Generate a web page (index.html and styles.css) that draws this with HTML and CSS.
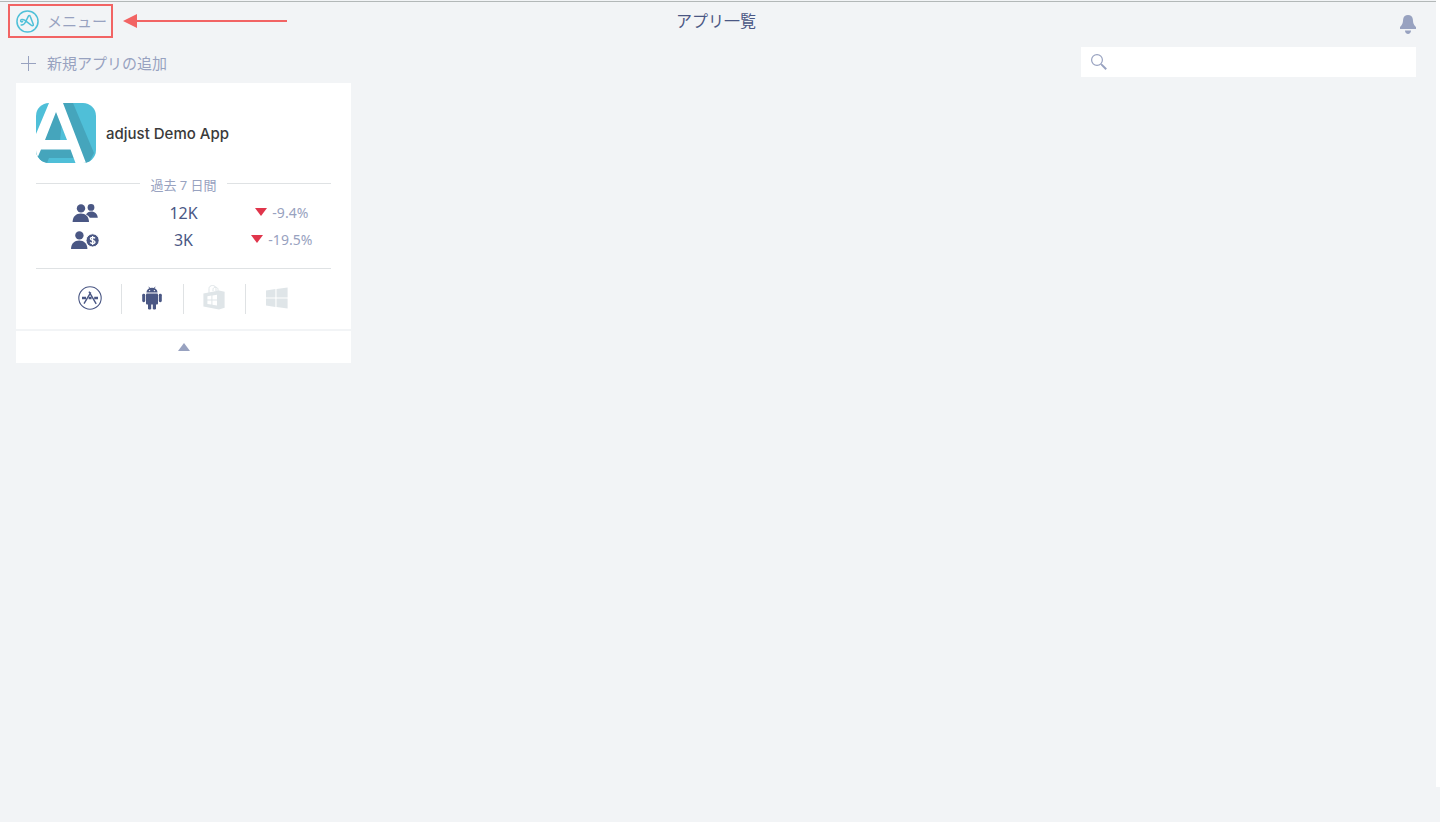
FILE: index.html
```html
<!DOCTYPE html>
<html lang="ja">
<head>
    <meta charset="UTF-8">
    <meta name="viewport" content="width=device-width, initial-scale=1.0">
    <title>アプリ一覧</title>
    <link rel="stylesheet" href="styles.css">
</head>
<body>
    <div class="page">
        <main class="content">
            <header class="header">
                <div class="header-left">
                    <button type="button" class="menu-btn">
                        <svg width="23" height="23" viewBox="0 0 24 24" fill="none" stroke="#4fc0d8" aria-hidden="true">
                            <circle cx="12" cy="12" r="11" stroke-width="1.6"/>
                            <path d="M5.4 15.6C7.6 15.8 9 14.4 9.8 12.800L12.800 6.600C13.400 5.400 14.400 5.400 14.800 6.600L18 14.800C18.600 16.400 17.200 16.800 15.800 15.800L9 10.600C7 9.200 4.600 9.800 4.800 11.400C5 12.600 6.400 12.600 6.800 12" stroke-width="1.600" stroke-linecap="round" stroke-linejoin="round"/>
                        </svg>
                        <span>メニュー</span>
                    </button>
                    <svg class="arrow" width="164" height="14" viewBox="0 0 164 14" aria-hidden="true">
                        <path d="M13 7h151" stroke="#f26464" stroke-width="2"/>
                        <path d="M0 7L14 0v14z" fill="#f26464"/>
                    </svg>
                </div>
                <h1>アプリ一覧</h1>
                <button type="button" class="bell-btn" aria-label="通知">
                    <svg width="16" height="20" viewBox="0 0 16 20" fill="#98a2c0" aria-hidden="true">
                        <path d="M8 0C10.6 0 12.4 1.4 12.8 4C13.2 7.2 13 9.2 16 12V14H0V12C3 9.2 2.8 7.2 3.2 4C3.6 1.4 5.4 0 8 0z"/>
                        <path d="M5 15.400h6c0 2-1.400 3.600-3 3.600S5 17.400 5 15.400z"/>
                    </svg>
                </button>
            </header>

            <div class="toolbar">
                <button type="button" class="add-btn">
                    <svg width="16" height="16" viewBox="0 0 16 16" stroke="#98a2c0" aria-hidden="true">
                        <path d="M7.5 0v15M0 7.5h15"/>
                    </svg>
                    <span>新規アプリの追加</span>
                </button>
                <label class="search">
                    <svg width="16" height="16" viewBox="0 0 16 16" fill="none" stroke="#98a2c0" aria-hidden="true">
                        <circle cx="6" cy="6" r="5.4" stroke-width="1.2"/>
                        <path d="M9.8 9.8l1 1" stroke-width="1.2"/>
                        <path d="M10.6 10.6l4.6 4.6" stroke-width="2"/>
                    </svg>
                    <input type="search" name="q" aria-label="アプリを検索">
                </label>
            </div>

            <div class="apps">
                <article class="card">
                    <div class="card-body">
                        <div class="app">
                            <svg width="60" height="60" viewBox="0 0 60 60" aria-hidden="true">
                                <defs>
                                    <clipPath id="logo-clip"><rect width="60" height="60" rx="13"/></clipPath>
                                </defs>
                                <g clip-path="url(#logo-clip)">
                                    <rect width="60" height="60" fill="#4fbfd8"/>
                                    <path d="M26 0h11l21 50-5 10h-5z" fill="#45a5bc"/>
                                    <path d="M20 8L33 38H8z" fill="#45a5bc"/>
                                    <path d="M25.500 23L32 38h-8z" fill="#4fbfd8"/>
                                    <path d="M0 45h40v15H0z" fill="#45a5bc"/>
                                    <path d="M13 55h27v5H11z" fill="#4fbfd8"/>
                                    <path d="M13 0h14l23 60H39.500L34.500 46.500H5L0 58V31z M20 9L9 37h22z" fill="#fff" fill-rule="evenodd"/>
                                </g>
                            </svg>
                            <h2>adjust Demo App</h2>
                        </div>

                        <div class="period"><span>過去 7 日間</span></div>

                        <table class="stats">
                            <tr>
                                <td>
                                    <svg width="28" height="20" viewBox="-1 0 28 20" fill="#4a5784" role="img" aria-label="ユーザー">
                                        <circle cx="19" cy="4.400" r="3.400"/>
                                        <path d="M14 11.400c1.200-2 3-3 5-3 4 0 6.600 2.600 6.800 6.400h-8c-.6-1.400-2-2.600-3.800-3.400z"/>
                                        <circle cx="9" cy="5.400" r="4.200"/>
                                        <path d="M.6 19c.2-5.400 3.400-8.400 8.200-8.400S16.800 13.600 17 19z"/>
                                    </svg>
                                </td>
                                <td class="value">12K</td>
                                <td class="delta"><span class="down"></span>-9.4%</td>
                            </tr>
                            <tr>
                                <td>
                                    <svg width="28" height="20" viewBox="0 0 28 20" fill="#4a5784" role="img" aria-label="課金ユーザー">
                                        <circle cx="8.400" cy="5.400" r="4.200"/>
                                        <path d="M0 19c.2-5.400 3.400-8.400 8.200-8.400S16.200 13.600 16.400 19z"/>
                                        <circle cx="21.600" cy="10.400" r="6.600" stroke="#fff" stroke-width="1"/>
                                        <path d="M24 8.400c-.6-1.200-4.600-1.600-4.600.4 0 2 4.600 1.200 4.600 3.300 0 2-4 1.700-4.800.3M21.600 6v9" fill="none" stroke="#fff" stroke-width="1.300"/>
                                    </svg>
                                </td>
                                <td class="value">3K</td>
                                <td class="delta"><span class="down"></span>-19.5%</td>
                            </tr>
                        </table>

                        <ul class="platforms">
                            <li>
                                <svg width="24" height="24" viewBox="0 0 24 24" fill="none" stroke="#4a5784" role="img" aria-label="App Store">
                                    <circle cx="12" cy="12" r="11.200" stroke-width="1.100"/>
                                    <path d="M12.800 6.400L6 17.600M11 5.600L18.200 17.800" stroke-width="1.400"/>
                                    <path d="M4 12h4M10.600 12h3M16.200 12H20" stroke-width="2.600"/>
                                </svg>
                            </li>
                            <li>
                                <svg width="24" height="24" viewBox="0 0 24 24" fill="#4a5784" role="img" aria-label="Android">
                                    <path d="M8.800.800l1.400 2M15.200.800l-1.400 2" stroke="#4a5784" stroke-width=".8"/>
                                    <path d="M6.400 6.600c.2-3 2.400-4.800 5.600-4.800s5.400 1.800 5.600 4.800z"/>
                                    <circle cx="9.600" cy="4.600" r=".7" fill="#fff"/>
                                    <circle cx="14.400" cy="4.600" r=".7" fill="#fff"/>
                                    <rect x="6" y="7.400" width="12" height="11" rx="1"/>
                                    <rect x="2.200" y="7.800" width="3" height="8.400" rx="1.400"/>
                                    <rect x="18.800" y="7.800" width="3" height="8.400" rx="1.400"/>
                                    <rect x="8" y="16" width="3.200" height="7.400" rx="1.200"/>
                                    <rect x="12.800" y="16" width="3.200" height="7.400" rx="1.200"/>
                                </svg>
                            </li>
                            <li>
                                <svg width="24" height="26" viewBox="0 1 24 26" fill="#dfe5e8" role="img" aria-label="Windows Store">
                                    <path d="M7 9V4.500c0-4 7-4 7 0V7M11 7V5.500c0-3 5-3 5 0V7" fill="none" stroke="#dfe5e8"/>
                                    <path d="M1.400 9.400L17 6.400l5.600 1.400v16L17 25.400 1.400 22.400z"/>
                                    <path d="M5.400 12.200l4-.6v4h-4zM10.400 11.400l4.600-.6v4.800h-4.600zM5.400 16.600h4v4l-4-.6zM10.400 16.600H15v4.800l-4.600-.6z" fill="#fff"/>
                                </svg>
                            </li>
                            <li>
                                <svg width="22" height="22" viewBox="0 0 22 22" fill="#dfe5e8" role="img" aria-label="Windows">
                                    <path d="M0 3.400l9.400-1.300v8.400H0zM10.500 1.900L21.600.4v10.100H10.500zM0 11.600h9.400v8.300L0 18.600zM10.500 11.600h11.100v10l-11.100-1.500z"/>
                                </svg>
                            </li>
                        </ul>
                    </div>
                    <button type="button" class="toggle" aria-label="閉じる"><span class="up"></span></button>
                </article>
            </div>
        </main>
        <div class="gutter"></div>
    </div>
</body>
</html>
```
FILE: styles.css
```css
* {
    box-sizing: border-box;
}

body {
    margin: 0;
    background-color: #f2f4f6;
    color: #98a2c0;
    font-family: 'Noto Sans', 'Noto Sans CJK JP', sans-serif;
}

button {
    border: none;
    background: none;
    padding: 0;
    color: inherit;
    font: inherit;
    cursor: pointer;
}

svg {
    display: block;
    flex: none;
}

.page {
    display: flex;
    min-height: 100vh;
    padding-bottom: 35px;
}

.content {
    flex: 1;
    margin-top: 1px;
    border-top: 1px solid #b3b8b8;
}

.gutter {
    width: 4px;
    background-color: #fff;
}

/* header */
.header {
    display: grid;
    grid-template-columns: 1fr auto 1fr;
    align-items: center;
    padding: 2px 12px 0 8px;
}

.header-left {
    display: flex;
    align-items: center;
    gap: 10px;
}

.menu-btn {
    display: flex;
    align-items: center;
    gap: 8px;
    width: 105px;
    height: 34px;
    padding-left: 6px;
    border: 2px solid #f26464;
    font-size: 15px;
    white-space: nowrap;
}

.menu-btn span,
.add-btn span {
    padding-bottom: 2px;
}

h1 {
    margin: 0;
    color: #4a5784;
    font-size: 16px;
    font-weight: 400;
    line-height: 24px;
}

.bell-btn {
    justify-self: end;
    padding: 8px 8px 0;
}

/* toolbar */
.toolbar {
    display: flex;
    justify-content: space-between;
    align-items: center;
    margin-top: 9px;
    padding: 0 20px 0 21px;
}

.add-btn {
    display: flex;
    align-items: center;
    gap: 10px;
    padding-top: 3px;
    font-size: 15px;
}

.search {
    display: flex;
    align-items: center;
    gap: 8px;
    width: 335px;
    height: 30px;
    padding: 0 10px;
    background-color: #fff;
}

.search input {
    flex: 1;
    min-width: 0;
    border: none;
    outline: none;
    background: none;
    color: #4a5784;
    font: inherit;
    font-size: 15px;
}

/* app cards */
.apps {
    display: flex;
    flex-wrap: wrap;
    gap: 16px;
    padding: 6px 16px;
}

.card {
    width: 335px;
    background-color: #fff;
}

.card-body {
    padding: 20px 20px 0;
}

.app {
    display: flex;
    align-items: center;
    gap: 10px;
}

h2 {
    margin: 0;
    color: #3a3a3a;
    font-family: Inter, 'Noto Sans CJK JP', sans-serif;
    font-size: 15px;
    font-weight: 500;
}

.period {
    display: flex;
    align-items: center;
    gap: 10px;
    height: 19px;
    margin-top: 11px;
    font-size: 13px;
}

.period span {
    padding-top: 2px;
}

.period::before,
.period::after {
    content: '';
    flex: 1;
    height: 1px;
    background-color: #dfe2e4;
}

.stats {
    width: 100%;
    margin-top: 6px;
    table-layout: fixed;
    border-collapse: collapse;
}

.stats td {
    height: 27px;
    padding: 0;
    text-align: center;
    line-height: 24px;
}

.stats svg {
    margin: 0 auto;
}

.stats .value {
    color: #4a5784;
    font-size: 16px;
}

.stats .delta {
    font-size: 14px;
}

.down {
    display: inline-block;
    margin-right: 5px;
    border: 6px solid transparent;
    border-top: 8px solid #e0354b;
    border-bottom: none;
    vertical-align: 2px;
}

.platforms {
    display: flex;
    justify-content: center;
    margin: 15px 0 0;
    padding: 15px 0;
    border-top: 1px solid #dfe2e4;
    list-style: none;
}

.platforms li {
    display: flex;
    justify-content: center;
    align-items: center;
    width: 62px;
    height: 30px;
    padding-bottom: 3px;
    border-right: 1px solid #dfe2e4;
}

.platforms li:last-child {
    border-right: none;
}

.toggle {
    display: flex;
    justify-content: center;
    align-items: center;
    width: 100%;
    height: 34px;
    border-top: 2px solid #f2f4f6;
}

.up {
    border: 6px solid transparent;
    border-top: none;
    border-bottom: 8px solid #98a2c0;
}
```
